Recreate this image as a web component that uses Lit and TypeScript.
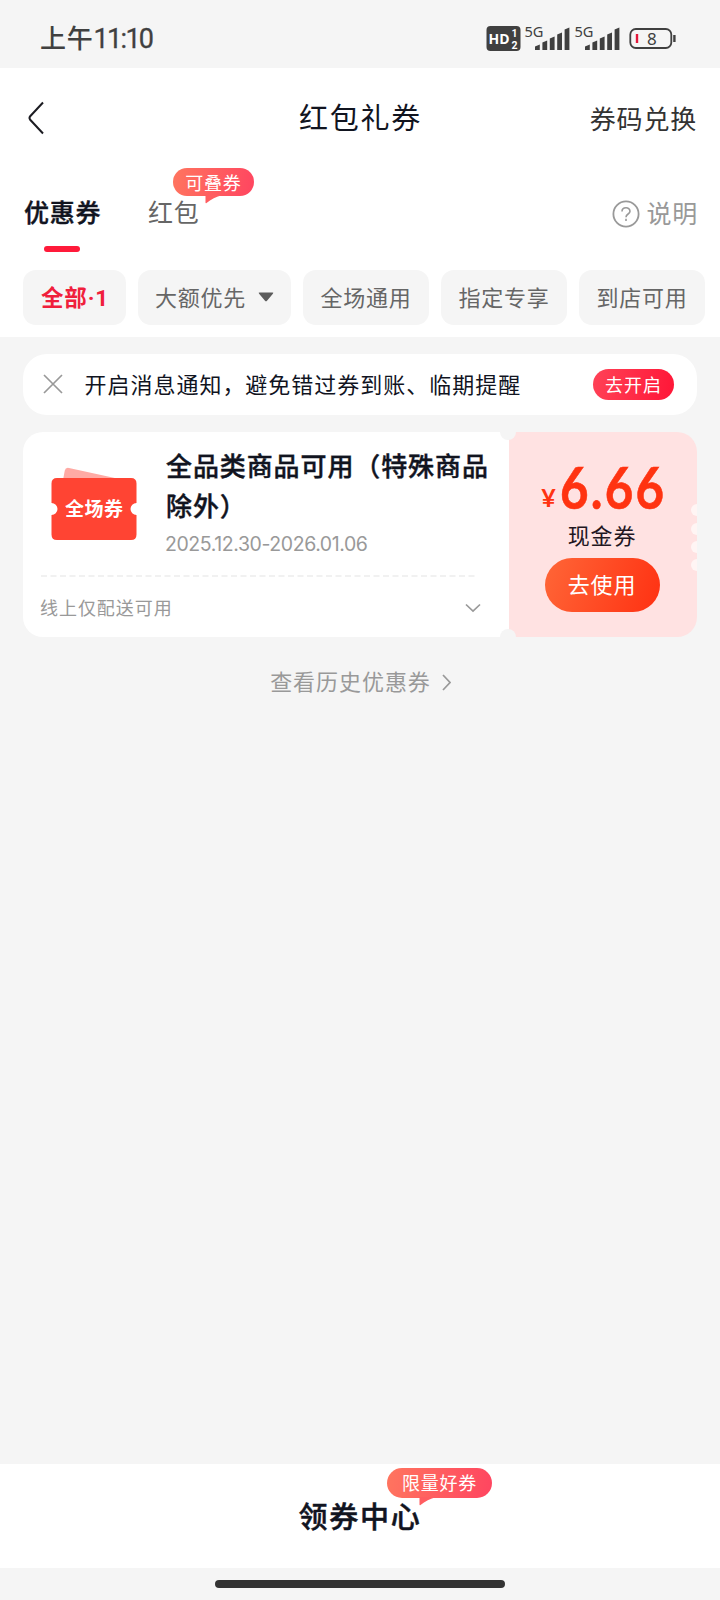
import { LitElement, html, svg, css } from "lit";
import { customElement, property } from "lit/decorators.js";
import { classMap } from "lit/directives/class-map.js";

interface Filter {
  label: string;
  active?: boolean;
  dropdown?: boolean;
}

const FILTERS: Filter[] = [
  { label: "全部·1", active: true },
  { label: "大额优先", dropdown: true },
  { label: "全场通用" },
  { label: "指定专享" },
  { label: "到店可用" },
];

@customElement("status-bar")
export class StatusBar extends LitElement {
  static styles = css`
    :host {
      display: flex;
      align-items: center;
      justify-content: space-between;
      height: 68px;
      padding: 0 43px 0 40px;
      box-sizing: border-box;
      color: #404040;
    }
    .time {
      font-size: 26px;
      line-height: 40px;
      letter-spacing: 0.8px;
      font-weight: 500;
      padding-top: 8px;
    }
    .clock {
      font-family: Roboto, sans-serif;
      font-size: 27px;
      letter-spacing: -1.7px;
      font-weight: 400;
      -webkit-text-stroke: 0.3px #404040;
    }
    .icons {
      display: block;
      margin-top: 8px;
    }
    .hd { font: 700 15px "Open Sans", sans-serif; }
    .sim { font: 700 10.5px Roboto, sans-serif; }
    .net { font: 400 14px "Noto Sans", sans-serif; }
    .pct { font: 400 17px "Noto Sans", sans-serif; }
  `;

  private signal(x: number) {
    return svg`
      <text class="net" x=${x} y="17" textLength="19" lengthAdjust="spacingAndGlyphs" fill="#404040">5G</text>
      ${[5, 9, 13, 17, 22].map(
        (h, i) => svg`<path fill="#404040" d="M${x + 10.5 + i * 7.4} 30v${-h + 1.6}l4.8 -2v${h + 0.4}z"/>`
      )}`;
  }

  render() {
    return html`
      <span class="time">上午<span class="clock">11:10</span></span>
      <svg class="icons" width="191" height="36" viewBox="0 0 191 36">
        <rect x="0.5" y="6" width="34" height="25" rx="4" fill="#404040" />
        <text class="hd" x="2.5" y="24" textLength="21" lengthAdjust="spacingAndGlyphs" fill="#fff">HD</text>
        <text class="sim" x="25.5" y="17" fill="#fff">1</text>
        <text class="sim" x="25.5" y="28.5" fill="#fff">2</text>
        ${this.signal(38.5)} ${this.signal(88.5)}
        <rect x="144.3" y="9" width="41" height="19" rx="5.5" fill="none" stroke="#404040" stroke-width="1.8" />
        <path d="M188.4 15v7" stroke="#404040" stroke-width="2.4" />
        <path d="M151 14v9" stroke="#e3173a" stroke-width="2.4" />
        <text class="pct" x="161" y="25" fill="#404040">8</text>
      </svg>
    `;
  }
}

@customElement("bubble-badge")
export class BubbleBadge extends LitElement {
  @property() label = "";
  static styles = css`
    :host {
      display: block;
      position: relative;
      box-sizing: border-box;
      border-radius: 16px;
      background: linear-gradient(100deg, #ff755f, #ff4560);
      color: #fff;
      font-size: 18px;
      letter-spacing: 0.8px;
      text-align: center;
      white-space: nowrap;
    }
    .tail {
      position: absolute;
      left: 32px;
      top: 100%;
      margin-top: -1px;
      display: block;
    }
  `;
  render() {
    return html`${this.label}<svg class="tail" width="18" height="9" viewBox="0 0 18 9">
        <path d="M0.5 0h17C11 1.600 6 4.500 1.500 8q-1 .6 -1 -.6z" fill="#ff5d60" />
      </svg>`;
  }
}

@customElement("coupon-card")
export class CouponCard extends LitElement {
  static styles = css`
    :host {
      display: grid;
      grid-template-columns: 486px 188px;
      height: 205px;
      position: relative;
    }
    .info {
      background: #fff;
      border-radius: 20px 0 0 20px;
      padding: 14px 17px 0 17px;
      display: flex;
      flex-direction: column;
      box-sizing: border-box;
    }
    .top {
      display: flex;
      height: 129px;
    }
    .ticket {
      flex: none;
      width: 88px;
      margin: 18px 28px 0 10px;
    }
    .name {
      font-size: 26px;
      line-height: 40px;
      letter-spacing: 0.9px;
      font-weight: 500;
      -webkit-text-stroke: 0.4px #11141f;
      color: #11141f;
      white-space: nowrap;
      margin-top: -1px;
    }
    .date {
      font-family: Inter, sans-serif;
      font-size: 19.5px;
      line-height: 24px;
      letter-spacing: -0.42px;
      color: #999;
      padding-top: 7px;
      margin-left: -1px;
    }
    .dash {
      display: block;
    }
    .more {
      display: flex;
      align-items: center;
      justify-content: space-between;
      font-size: 18px;
      letter-spacing: 0.95px;
      line-height: 28px;
      color: #999;
      padding: 16px 11px 0 0;
    }
    .more svg {
      margin-top: 2px;
    }
    .value {
      background: #ffe2e2;
      border-radius: 0 20px 20px 0;
      display: flex;
      flex-direction: column;
      align-items: center;
      box-sizing: border-box;
      padding: 28px 2px 0 0;
    }
    .price {
      display: flex;
      align-items: baseline;
      color: #ff3311;
      font-family: Lato, sans-serif;
      font-weight: 700;
      line-height: 54px;
      height: 60px;
    }
    .yen {
      font-size: 25px;
      margin-right: 4px;
      transform: translateY(-2px);
    }
    .amount {
      display: inline-block;
      font-size: 58px;
      letter-spacing: 2.6px;
      transform: scaleX(0.85);
      transform-origin: 0 50%;
      margin-right: -22px;
      -webkit-text-stroke: 0.6px #ff3311;
    }
    .kind {
      font-size: 22px;
      letter-spacing: 0.8px;
      line-height: 32px;
      margin-top: -2px;
      color: #22161f;
    }
    .use {
      margin-top: 8px;
      width: 115px;
      height: 54px;
      border-radius: 27px;
      background: linear-gradient(110deg, #ff6637, #ff3112);
      color: #fff;
      font-size: 22px;
      letter-spacing: 0.8px;
      line-height: 51px;
      text-align: center;
    }
    .edge {
      position: absolute;
      inset: 0;
      pointer-events: none;
    }
  `;
  render() {
    return html`
      <div class="info">
        <div class="top">
          <svg class="ticket" width="88" height="80" viewBox="0 0 88 80">
            <path d="M13 16 14.800 6.500Q15.500 3.300 19 4L74 16z" fill="#ffaaa4" />
            <path
              d="M7 14H81Q86.500 14 86.500 19.500V39a6 6 0 0 0 0 12V70.500Q86.500 76 81 76H7Q1.500 76 1.500 70.500V51a6 6 0 0 0 0-12V19.500Q1.500 14 7 14z"
              fill="#ff4433"
            />
            <text x="15" y="52" font-size="19" font-weight="700" fill="#fff" textLength="58">全场券</text>
          </svg>
          <div>
            <div class="name">全品类商品可用（特殊商品<br />除外）</div>
            <div class="date">2025.12.30-2026.01.06</div>
          </div>
        </div>
        <svg class="dash" width="436" height="2" viewBox="0 0 436 2">
          <path d="M1 1H436" stroke="#f1f1f1" stroke-width="1.800" stroke-dasharray="6 3.500" />
        </svg>
        <div class="more">
          <span>线上仅配送可用</span>
          <svg width="16" height="10" viewBox="0 0 16 10">
            <path d="M1 1.500 8 8l7-6.500" fill="none" stroke="#999" stroke-width="1.700" />
          </svg>
        </div>
      </div>
      <div class="value">
        <div class="price"><span class="yen">¥</span><span class="amount">6.66</span></div>
        <div class="kind">现金券</div>
        <div class="use">去使用</div>
      </div>
      <svg class="edge" width="674" height="205" viewBox="0 0 674 205">
        <g fill="#f5f5f5">
          <circle cx="485" cy="0" r="8" />
          <circle cx="485" cy="205" r="8" />
        </g>
        <g fill="#fff5f4">
          ${[78, 97, 115, 133].map((y) => svg`<circle cx="674" cy=${y} r="6"/>`)}
        </g>
        <path d="M485.200 8V197" stroke="#fff" stroke-width="1.600" />
      </svg>
    `;
  }
}

@customElement("app-root")
export class AppRoot extends LitElement {
  static styles = css`
    :host {
      display: flex;
      flex-direction: column;
      height: 1600px;
      width: 720px;
      background: #f5f5f5;
      overflow: hidden;
      font-family: "Noto Sans CJK SC", "Noto Sans", sans-serif;
      color: #11141f;
    }
    .head {
      background: #fff;
      height: 269px;
      flex: none;
    }
    .nav {
      display: grid;
      grid-template-columns: 1fr auto 1fr;
      align-items: center;
      height: 100px;
      padding: 0 23px 0 27px;
    }
    .title {
      font-size: 29px;
      letter-spacing: 1.8px;
      line-height: 44px;
      margin-left: -3px;
      padding-bottom: 4px;
    }
    .redeem {
      justify-self: end;
      font-size: 26px;
      letter-spacing: 0.8px;
      line-height: 40px;
      color: #333;
      padding-bottom: 1px;
    }
    .tabs {
      display: flex;
      height: 102px;
      padding: 23px 22px 0 24px;
      line-height: 40px;
      font-size: 25px;
      letter-spacing: 0.8px;
      box-sizing: border-box;
    }
    .tab {
      position: relative;
      height: 60px;
      color: #666;
      margin-right: 46.5px;
    }
    .tab.on {
      color: #11141f;
      font-weight: 500;
      -webkit-text-stroke: 0.4px #11141f;
    }
    .tab.on::after {
      content: "";
      display: block;
      width: 36px;
      height: 6px;
      border-radius: 3px;
      background: #ff1a3a;
      margin: 15px auto 0 20px;
    }
    .stack-badge {
      position: absolute;
      left: 25px;
      top: -23px;
      width: 81px;
      height: 28px;
      line-height: 28px;
    }
    .help {
      margin-left: auto;
      display: flex;
      align-items: center;
      height: 42px;
      gap: 6px;
      color: #999;
    }
    .help svg {
      margin-top: 3px;
    }
    .filters {
      display: flex;
      gap: 12px;
      padding-left: 23px;
    }
    .chip {
      flex: none;
      width: 126px;
      height: 55px;
      border-radius: 13px;
      background: #f5f5f5;
      color: #666;
      font-size: 22px;
      letter-spacing: 0.8px;
      line-height: 53px;
      padding-bottom: 2px;
      box-sizing: border-box;
      display: flex;
      align-items: center;
      justify-content: center;
      white-space: nowrap;
    }
    .chip.on {
      width: 103px;
      color: #f0203c;
      font-family: Roboto, "Noto Sans CJK SC", sans-serif;
      font-size: 22.5px;
      font-weight: 700;
      padding: 2px 0 0 1px;
    }
    .chip.drop {
      width: 153px;
      gap: 12px;
    }
    .body {
      flex: 1;
      padding: 17px 23px 0;
    }
    .notice {
      display: flex;
      align-items: center;
      height: 61px;
      border-radius: 24px;
      background: #fff;
      padding: 0 23px 0 20px;
      margin-bottom: 17px;
      font-size: 22px;
      letter-spacing: 0.98px;
      white-space: nowrap;
    }
    .notice svg {
      margin-bottom: 2px;
    }
    .message {
      flex: 1;
      margin-left: 21.5px;
      line-height: 58px;
      padding-bottom: 4px;
    }
    .enable {
      width: 81px;
      height: 31px;
      border-radius: 16px;
      background: linear-gradient(100deg, #ff4257, #ff1637);
      color: #fff;
      font-size: 18px;
      line-height: 30px;
      text-align: center;
    }
    .history {
      display: flex;
      align-items: center;
      justify-content: center;
      gap: 11px;
      margin-top: 24px;
      padding-left: 1px;
      font-size: 22px;
      letter-spacing: 0.95px;
      line-height: 38px;
      color: #999;
    }
    .history svg {
      margin-top: 4px;
    }
    .foot {
      position: relative;
      height: 104px;
      background: #fff;
      font-size: 29px;
      letter-spacing: 1.7px;
      font-weight: 500;
      -webkit-text-stroke: 0.5px #11141f;
      line-height: 102px;
      text-align: center;
    }
    .limit-badge {
      position: absolute;
      left: 387px;
      top: 4px;
      width: 105px;
      height: 30px;
      line-height: 29px;
      font-weight: 400;
      -webkit-text-stroke: 0;
    }
    .home {
      height: 32px;
      display: flex;
      justify-content: center;
      align-items: center;
    }
    .pill {
      width: 290px;
      height: 8px;
      border-radius: 4px;
      background: #333;
    }
  `;

  render() {
    return html`
      <status-bar></status-bar>
      <div class="head">
        <div class="nav">
          <svg width="18" height="34" viewBox="0 0 18 34">
            <path d="M16 1.500 3.200 15.200Q1.800 17 3.200 18.800L16 32.500" fill="none" stroke="#1c1c22" stroke-width="2" />
          </svg>
          <div class="title">红包礼券</div>
          <div class="redeem">券码兑换</div>
        </div>
        <div class="tabs">
          <div class="tab on">优惠券</div>
          <div class="tab">红包<bubble-badge class="stack-badge" label="可叠券"></bubble-badge></div>
          <div class="help">
            <svg width="28" height="28" viewBox="0 0 28 28" fill="none" stroke="#999" stroke-width="1.800">
              <circle cx="14" cy="14" r="12.600" />
              <path d="M10 11.500C10 6.500 18 6.500 18 11.300C18 14.200 14 13.800 14 17.200M14 18.800V21" stroke-width="1.600" />
            </svg>
            <span>说明</span>
          </div>
        </div>
        <div class="filters">
          ${FILTERS.map(
            (f) => html`<div class=${classMap({ chip: true, on: !!f.active, drop: !!f.dropdown })}>
              ${f.label}${f.dropdown
                ? html`<svg width="16" height="10" viewBox="0 0 16 10">
                    <path d="M1.500 .5h13q1.500 0 .4 1.300L9 8.800q-1 1-2 0L1.100 1.800Q0 .5 1.500 .5z" fill="#5c5c5c" />
                  </svg>`
                : null}
            </div>`
          )}
        </div>
      </div>
      <div class="body">
        <div class="notice">
          <svg width="20" height="20" viewBox="0 0 20 20">
            <path d="M1 1 19 19M19 1 1 19" stroke="#999" stroke-width="1.700" />
          </svg>
          <span class="message">开启消息通知，避免错过券到账、临期提醒</span>
          <span class="enable">去开启</span>
        </div>
        <coupon-card></coupon-card>
        <div class="history">
          <span>查看历史优惠券</span>
          <svg width="9" height="17" viewBox="0 0 9 17">
            <path d="M1 1 8 8.500 1 16" fill="none" stroke="#999" stroke-width="1.700" />
          </svg>
        </div>
      </div>
      <div class="foot">
        领券中心
        <bubble-badge class="limit-badge" label="限量好券"></bubble-badge>
      </div>
      <div class="home"><div class="pill"></div></div>
    `;
  }
}
